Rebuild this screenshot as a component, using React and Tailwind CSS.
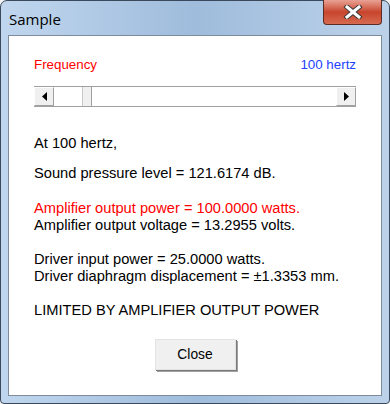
import React from 'react';

function ArrowButton({ dir }) {
    return (
        <div className="w-[20px] h-full bg-[#f0f0f0] border-r border-b border-[#a0a0a0] border-t border-t-white border-l border-l-white flex items-center justify-center">
            <svg width="5" height="9" viewBox="0 0 5 9">
                {dir === 'left' ? (
                    <polygon points="5,0 5,9 0,4.5" fill="#000" />
                ) : (
                    <polygon points="0,0 0,9 5,4.5" fill="#000" />
                )}
            </svg>
        </div>
    );
}

export default function App() {
    const font = "font-['Liberation_Sans',Arial,sans-serif] text-black";
    const body = `${font} text-[14.67px] leading-[17px]`;

    return (
        <div className="w-[390px] h-[404px] bg-[#f3f3f3]">
            <div className="w-[390px] h-[404px] rounded-t-[7px] rounded-b-[4px] border border-[#3a4a5c] bg-gradient-to-r from-[#c0d6ee] via-[#9fbcdc] to-[#bcd2ea] flex flex-col px-[7px] pb-[7px]">
                {/* Title bar */}
                <div className="h-[34px] flex items-start justify-between relative">
                    <span className="mt-[9px] ml-[1px] font-['Open_Sans',sans-serif] text-[15px] leading-[18px] text-black">
                        Sample
                    </span>
                    <div className="w-[59px] h-[25px] -mt-px rounded-b-[4px] border border-[#5b2c26] border-t-0 bg-gradient-to-b from-[#e8a194] via-[#c7442c] to-[#d66a50] flex items-center justify-center">
                        <svg width="22" height="14" viewBox="0 0 22 14">
                            <path d="M5 2 L17 12 M17 2 L5 12" stroke="#3b3b3b" strokeWidth="5" strokeLinecap="square" />
                            <path d="M5 2 L17 12 M17 2 L5 12" stroke="#ffffff" strokeWidth="3" strokeLinecap="square" />
                        </svg>
                    </div>
                </div>

                {/* Client area */}
                <div className="flex-1 bg-white border border-[#7d8b9b] flex flex-col px-[25px] pb-[24px]">
                    <div className={`${font} text-[13.33px] leading-[16px] mt-[21px] flex justify-between`}>
                        <span className="text-[#ff0000]">Frequency</span>
                        <span className="text-[#2242ff]">100 hertz</span>
                    </div>

                    {/* Scrollbar */}
                    <div className="mt-[13px] h-[21px] flex border-t border-[#a0a0a0] border-b border-b-[#a0a0a0] bg-white">
                        <ArrowButton dir="left" />
                        <div className="flex-1 flex">
                            <div className="w-[28px]" />
                            <div className="w-[10px] h-full bg-[#f0f0f0] border-l border-[#c8c8c8] border-r border-r-[#a0a0a0]" />
                            <div className="flex-1" />
                        </div>
                        <ArrowButton dir="right" />
                    </div>

                    <div className={`${body} mt-[28px]`}>
                        <p>At 100 hertz,</p>
                        <p className="mt-[13px]">Sound pressure level = 121.6174 dB.</p>
                        <p className="mt-[18px] text-[#ff0000]">Amplifier output power = 100.0000 watts.</p>
                        <p>Amplifier output voltage = 13.2955 volts.</p>
                        <p className="mt-[17px]">Driver input power = 25.0000 watts.</p>
                        <p>Driver diaphragm displacement = ±1.3353 mm.</p>
                        <p className="mt-[17px]">LIMITED BY AMPLIFIER OUTPUT POWER</p>
                    </div>

                    <div className="mt-[20px] flex justify-center">
                        <button className={`${font} text-[13.8px] leading-[16px] w-[81px] h-[31px] bg-[#f0f0f0] border border-[#e3e3e3] shadow-[1px_1px_0_#7a7a7a,2px_2px_0_#a0a0a0]`}>
                            Close
                        </button>
                    </div>
                </div>
            </div>
        </div>
    );
}
